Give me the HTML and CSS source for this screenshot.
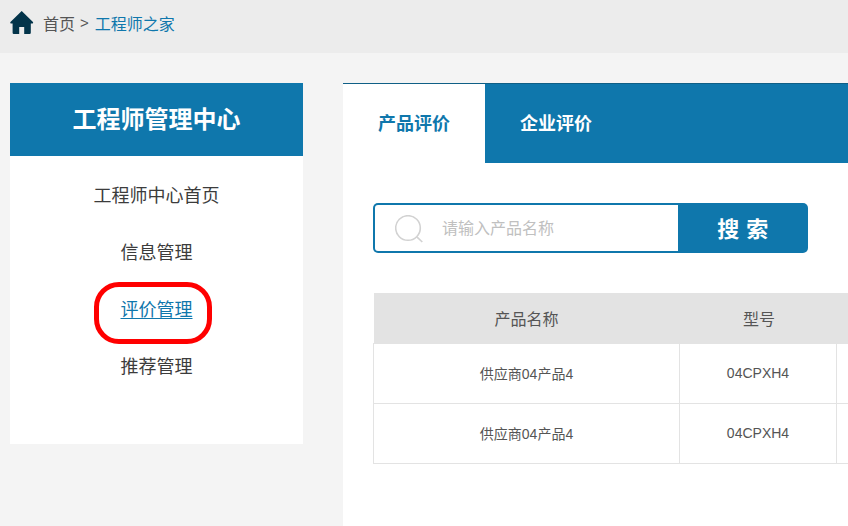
FILE: index.html
```html
<!DOCTYPE html>
<html lang="zh-CN">
<head>
<meta charset="utf-8">
<title>工程师之家</title>
<link rel="stylesheet" href="styles.css">
</head>
<body>
<header class="crumbs">
  <svg class="home" viewBox="0 0 24 24" width="24" height="24"><path fill="#03344a" d="M11.700 0 .2 11.300.6 12.400H2.600V21.800Q2.600 23 3.800 23H9.200V16H14.200V23H19.600Q20.800 23 20.800 21.800V12.400H22.800L23.200 11.300Z"/></svg>
  <a class="crumb">首页</a><span class="sep">&gt;</span><a class="crumb current">工程师之家</a>
</header>
<main class="layout">
  <aside class="side">
    <h2 class="side-title">工程师管理中心</h2>
    <nav class="side-nav">
      <a class="nav-item">工程师中心首页</a>
      <a class="nav-item">信息管理</a>
      <a class="nav-item active">评价管理</a>
      <a class="nav-item">推荐管理</a>
    </nav>
  </aside>
  <section class="panel">
    <div class="tabs">
      <a class="tab on">产品评价</a>
      <a class="tab">企业评价</a>
    </div>
    <form class="search">
      <div class="field">
        <svg class="lens" viewBox="0 0 28 28" width="28" height="28"><circle cx="13" cy="13" r="12.300" fill="none" stroke="#d2d2d2" stroke-width="1.600"/><path d="M21.800 21.800 27.300 27" stroke="#d2d2d2" stroke-width="1.600" fill="none"/></svg>
        <span class="placeholder">请输入产品名称</span>
      </div>
      <button class="go" type="button">搜 索</button>
    </form>
    <table class="grid">
      <colgroup><col class="c1"><col class="c2"><col class="c3"></colgroup>
      <thead><tr><th>产品名称</th><th>型号</th><th></th></tr></thead>
      <tbody>
        <tr><td>供应商04产品4</td><td>04CPXH4</td><td></td></tr>
        <tr><td>供应商04产品4</td><td>04CPXH4</td><td></td></tr>
      </tbody>
    </table>
  </section>
</main>
</body>
</html>
```
FILE: styles.css
```css
* { box-sizing: border-box; }
html, body { margin: 0; height: 100%; overflow: hidden; }
body {
  background: #f4f4f4;
  font-family: "Liberation Sans", "Noto Sans CJK SC", sans-serif;
  color: #444;
}
.crumbs {
  height: 53px;
  background: #ececec;
  display: flex;
  align-items: center;
  padding: 0 0 8px 10px;
  font-size: 16px;
  color: #555;
}
.home { margin-right: 9px; }
.sep { margin: 0 6px 0 5px; font-size: 15px; }
.current { color: #0f77ac; }
.layout {
  display: flex;
  align-items: flex-start;
  padding: 30px 0 0 10px;
  gap: 40px;
}
.side { width: 293px; height: 361px; background: #fff; flex: none; }
.side-title {
  margin: 0;
  height: 73px;
  line-height: 74px;
  background: #0f77ac;
  color: #fff;
  font-size: 24px;
  font-weight: 700;
  text-align: center;
}
.side-nav {
  display: flex;
  flex-direction: column;
  align-items: center;
  padding-top: 12px;
  font-size: 18px;
  color: #3c3c3c;
}
.nav-item { height: 57px; line-height: 57px; position: relative; }
.nav-item.active { color: #0f77ac; text-decoration: underline; text-underline-offset: 2px; }
.nav-item.active::after {
  content: "";
  position: absolute;
  left: -27px;
  right: -19px;
  top: 0;
  height: 52px;
  border: 5px solid #f00;
  border-radius: 25px;
}
.panel {
  flex: 1;
  min-width: 0;
  height: 443px;
  background: #fff;
  border-top: 1px solid #0f5f86;
  overflow: hidden;
}
.tabs { display: flex; height: 79px; background: #0f77ac; }
.tab {
  width: 142px;
  line-height: 80px;
  text-align: center;
  font-size: 18px;
  font-weight: 700;
  color: #fff;
}
.tab.on { background: #fff; color: #0f77ac; }
.search {
  display: flex;
  width: 435px;
  height: 50px;
  margin: 40px 0 40px 30px;
  border-radius: 5px;
  overflow: hidden;
  background: #0f77ac;
  padding: 2px;
}
.field {
  width: 303px;
  background: #fff;
  display: flex;
  align-items: center;
  padding-left: 20px;
  border-radius: 3px 0 0 3px;
}
.lens { margin-right: 19px; margin-top: 2px; }
.placeholder { font-size: 16px; color: #c0c0c0; margin-top: -2px; }
.go {
  flex: 1;
  border: 0;
  background: transparent;
  color: #fff;
  font: 700 22px "Liberation Sans", "Noto Sans CJK SC", sans-serif;
  letter-spacing: 0.5px;
  padding: 0 0 3px 2px;
}
.grid {
  margin-left: 30px;
  width: 600px;
  table-layout: fixed;
  border-collapse: collapse;
  font-size: 14px;
  color: #555;
}
.c1 { width: 306px; }
.c2 { width: 157px; }
.grid th {
  height: 50px;
  background: #e3e3e3;
  font-size: 16px;
  font-weight: 400;
  color: #555;
}
.grid th:nth-child(2) { padding-left: 3px; }
.grid td {
  height: 60px;
  text-align: center;
  border: 1px solid #e3e3e3;
}
```
